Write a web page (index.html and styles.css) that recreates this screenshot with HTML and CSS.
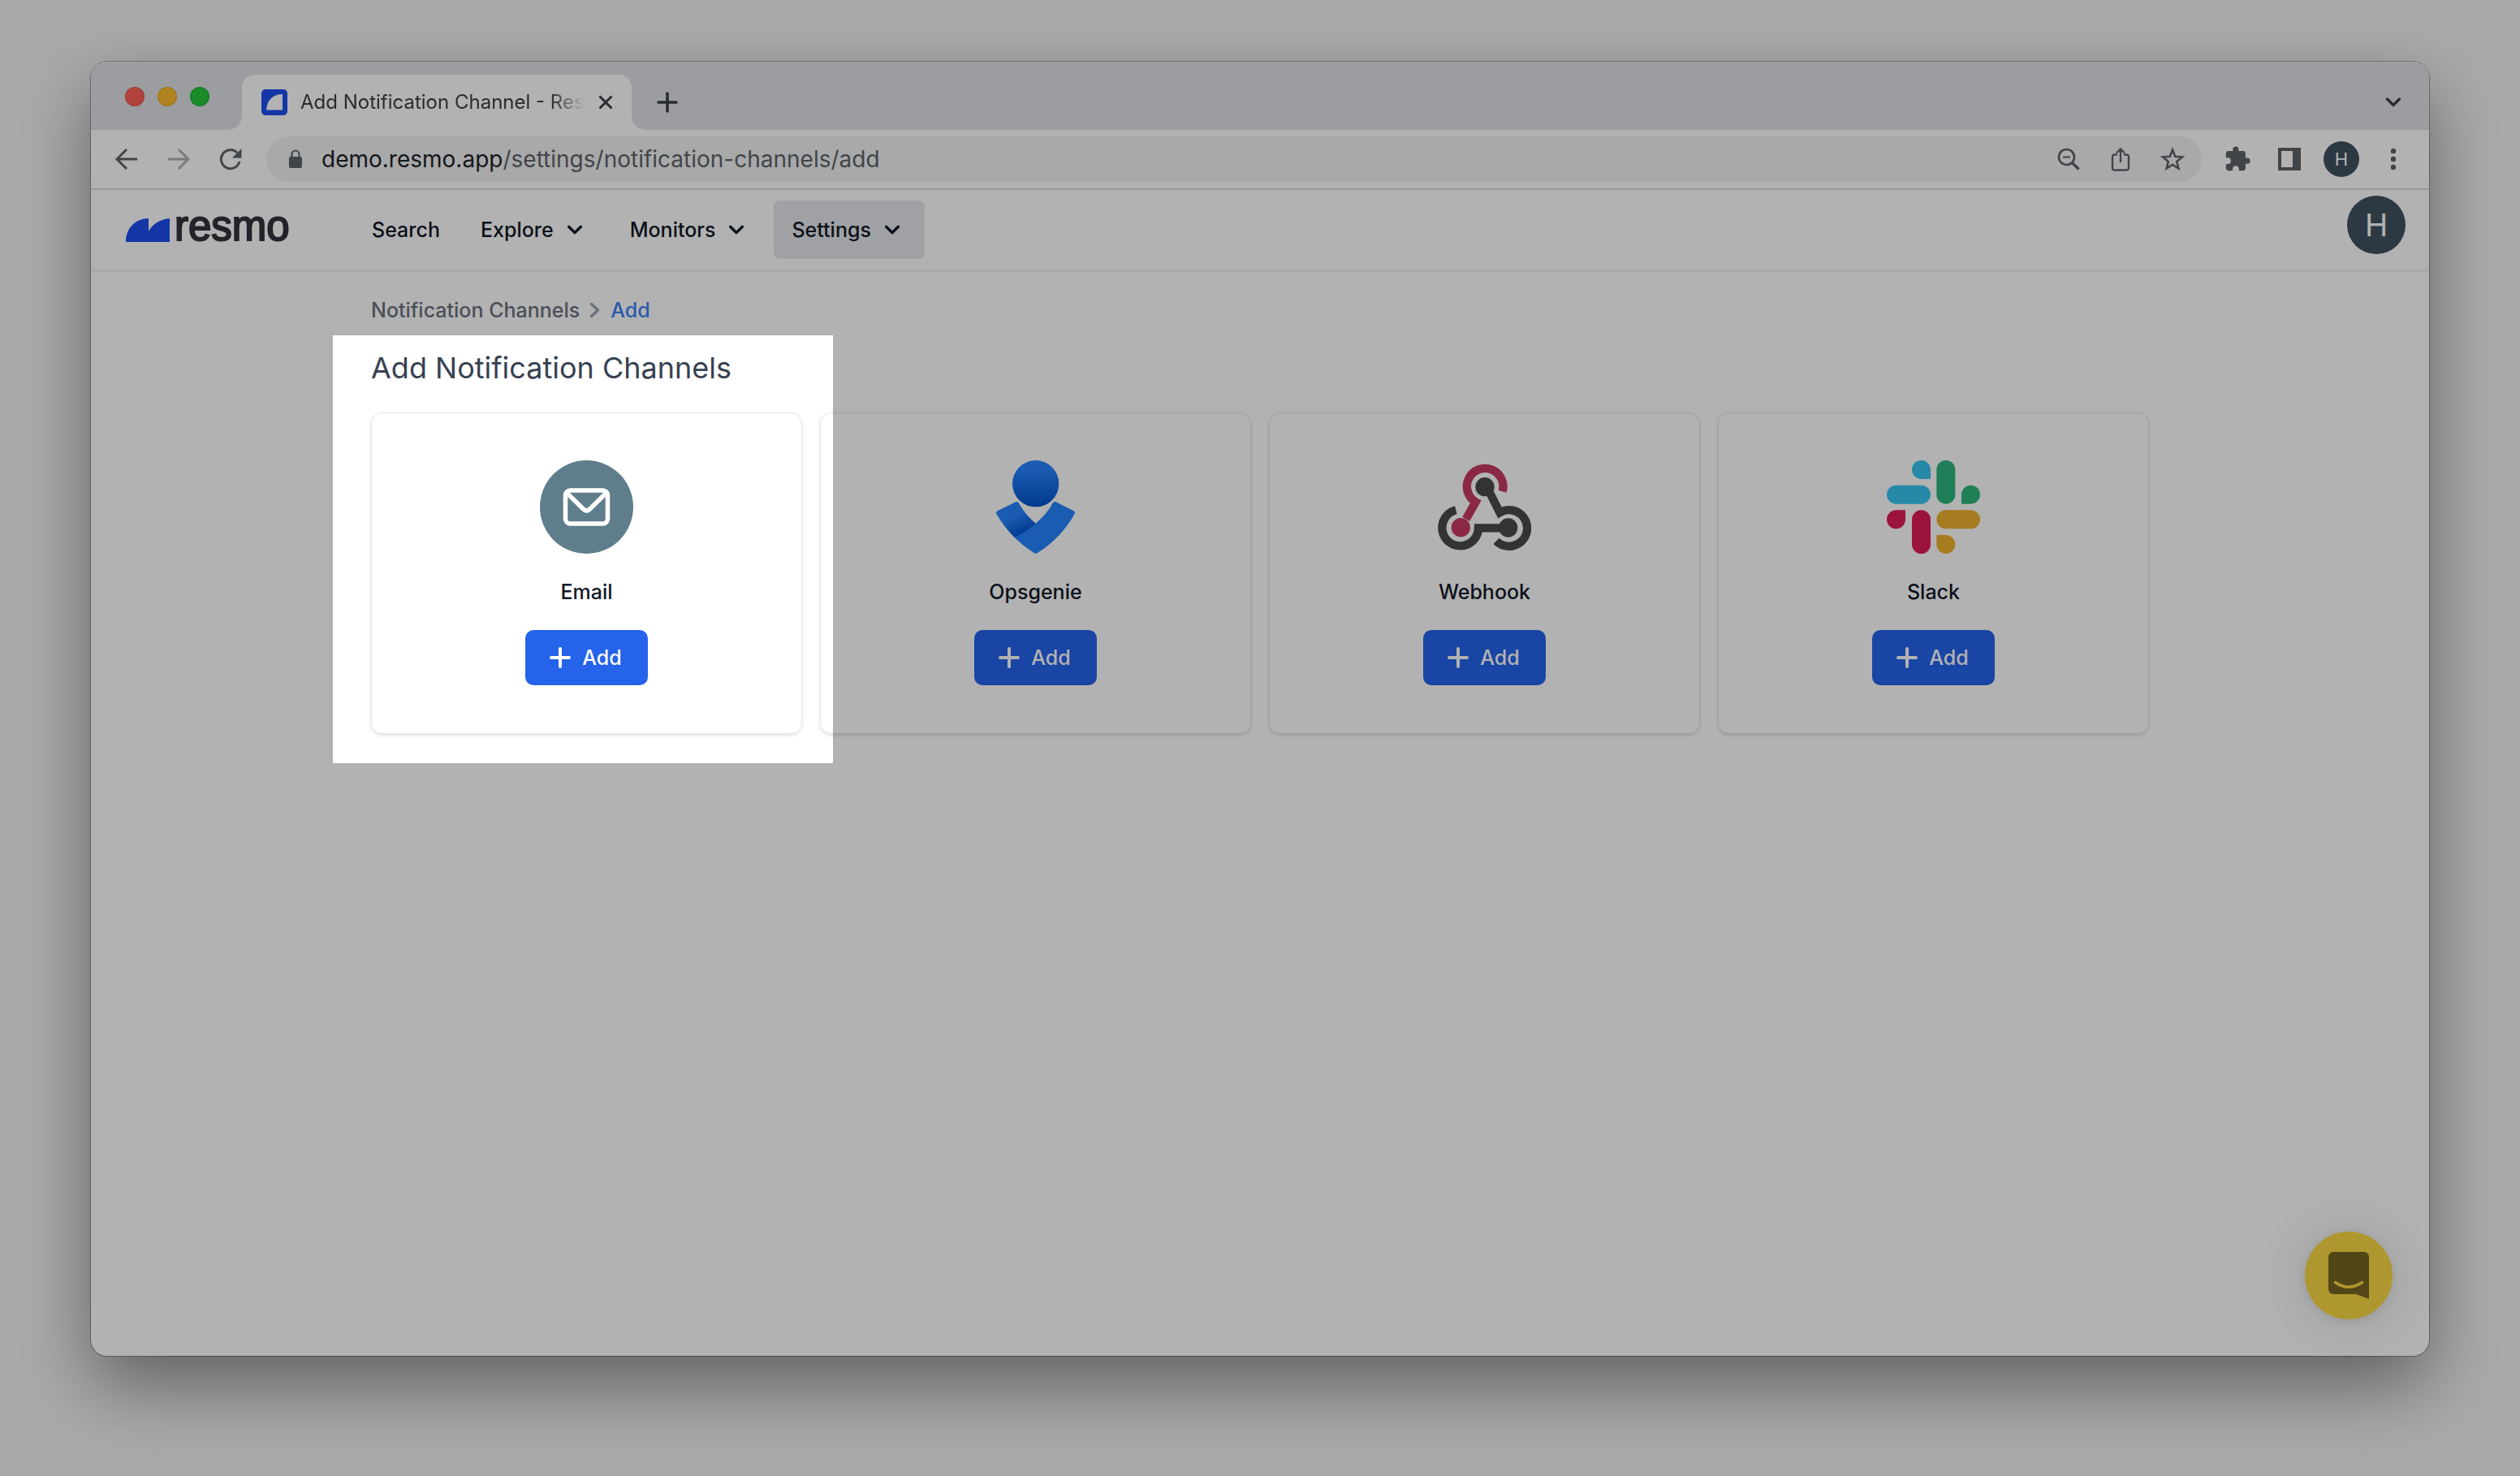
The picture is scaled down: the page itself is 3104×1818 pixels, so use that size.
FILE: index.html
```html
<!DOCTYPE html>
<html lang="en">
<head>
<meta charset="utf-8">
<meta name="viewport" content="width=device-width, initial-scale=1">
<title>Add Notification Channel - Resmo</title>
<link rel="stylesheet" href="styles.css">
</head>
<body>
<svg class="sprite" aria-hidden="true">
  <symbol id="chevron" viewBox="0 0 20 20"><path d="M5.9 7.9 10 12l4.1-4.1" fill="none" stroke="currentColor" stroke-width="1.9" stroke-linecap="round" stroke-linejoin="round"/></symbol>
  <symbol id="plus" viewBox="0 0 36 36"><path d="M18 7v22M7 18h22" fill="none" stroke="currentColor" stroke-width="4" stroke-linecap="round"/></symbol>
</svg>
<div class="window">
  <div class="tabstrip">
    <div class="lights"><span class="light red"></span><span class="light amber"></span><span class="light green"></span></div>
    <div class="tab">
      <svg class="favicon" viewBox="0 0 32 32"><rect width="32" height="32" rx="5" fill="#1d4ef0"/><path d="M6 25.500C7 14 13 6 26 6v19.500z" fill="#fff"/></svg>
      <span class="tab-title">Add Notification Channel - Resmo</span>
      <button class="plain" aria-label="Close tab"><svg width="20" height="20" viewBox="0 0 20 20"><path d="M2.500 2.500l15 15M17.500 2.500l-15 15" stroke="#3c4043" stroke-width="3"/></svg></button>
    </div>
    <button class="plain new-tab" aria-label="New tab"><svg width="26" height="26" viewBox="0 0 26 26"><path d="M13 2v22M2 13h22" stroke="#3c4043" stroke-width="3.600" stroke-linecap="round"/></svg></button>
    <button class="plain tool tab-search" aria-label="Search tabs"><svg width="24" height="24" viewBox="0 0 24 24"><path d="M4.500 8 12 15.500 19.500 8" fill="none" stroke="#3c4043" stroke-width="3.200" stroke-linecap="round" stroke-linejoin="round"/></svg></button>
  </div>
  <div class="toolbar">
    <button class="plain tool" aria-label="Back"><svg width="32" height="32" viewBox="0 0 32 32"><path d="M29 16H4.500M16 4 4 16l12 12" fill="none" stroke="#5f6368" stroke-width="3"/></svg></button>
    <button class="plain tool faded" aria-label="Forward"><svg width="32" height="32" viewBox="0 0 32 32"><path d="M3 16h24.500M16 4l12 12-12 12" fill="none" stroke="#5f6368" stroke-width="3"/></svg></button>
    <button class="plain tool" aria-label="Reload"><svg width="32" height="32" viewBox="0 0 32 32"><path d="M27 19a11.500 11.500 0 1 1-3-11" fill="none" stroke="#5f6368" stroke-width="3"/><path d="M29.500 3v11.500H18z" fill="#5f6368"/></svg></button>
    <div class="omnibox">
      <svg class="lock" width="24" height="28" viewBox="0 0 24 28"><rect x="4" y="11" width="16" height="14" rx="2" fill="#5f6368"/><path d="M7.500 12V8a4.500 4.500 0 0 1 9 0v4" fill="none" stroke="#5f6368" stroke-width="2.200"/></svg>
      <div class="url" role="textbox" aria-label="Address" contenteditable="true" spellcheck="false"><span class="host">demo.resmo.app</span>/settings/notification-channels/add</div>
      <button class="plain tool" aria-label="Zoom"><svg width="32" height="32" viewBox="0 0 32 32"><g fill="none" stroke="#5f6368"><circle cx="13.500" cy="13.500" r="9.500" stroke-width="2.600"/><path d="M9 13.500h9" stroke-width="2"/><path d="M20.500 20.500l8 8" stroke-width="3.600"/></g></svg></button>
      <button class="plain tool" aria-label="Share"><svg width="32" height="32" viewBox="0 0 32 32"><path d="M12 10.500H8.500A2.500 2.500 0 0 0 6 13v14a2.500 2.500 0 0 0 2.500 2.500h15A2.500 2.500 0 0 0 26 27V13a2.500 2.500 0 0 0-2.500-2.500H20M16 20V4M11 8.500l5-5 5 5" fill="none" stroke="#5f6368" stroke-width="2.400"/></svg></button>
      <button class="plain tool" aria-label="Bookmark"><svg width="32" height="32" viewBox="0 0 32 32"><path d="M16 4.500l3.200 8.200 8.800.6-6.800 5.600 2.200 8.600-7.400-4.700-7.400 4.700 2.200-8.600L4 13.300l8.800-.6z" fill="none" stroke="#5f6368" stroke-width="2.600"/></svg></button>
    </div>
    <button class="plain tool" aria-label="Extensions"><svg width="34" height="34" viewBox="0 0 24 24"><path d="M20.500 11H19V7c0-1.100-.9-2-2-2h-4V3.500a2.500 2.500 0 0 0-5 0V5H4c-1.100 0-2 .9-2 2v3.800h1.500a2.700 2.700 0 0 1 0 5.400H2V20c0 1.100.9 2 2 2h3.800v-1.500a2.700 2.700 0 0 1 5.400 0V22H17c1.100 0 2-.9 2-2v-4h1.500a2.500 2.500 0 0 0 0-5z" fill="#5f6368"/></svg></button>
    <button class="plain tool" aria-label="Side panel"><svg width="28" height="28" viewBox="0 0 28 28"><path d="M0 0h28v28H0zM4 4v20h14V4z" fill="#5f6368" fill-rule="evenodd"/></svg></button>
    <button class="plain tool" aria-label="Profile"><span class="avatar small">H</span></button>
    <button class="plain tool" aria-label="Menu"><svg width="28" height="28" viewBox="0 0 28 28" fill="#5f6368"><circle cx="14" cy="4" r="3.200"/><circle cx="14" cy="14" r="3.200"/><circle cx="14" cy="24" r="3.200"/></svg></button>
  </div>
  <header class="app-header">
    <a class="logo" href="#"><svg width="54" height="29" viewBox="0 0 54 29"><path d="M0 29C0 12 12 0 28 0v16C33 7 42 1 54 0v29z" fill="#1d4ef0"/></svg><span>resmo</span></a>
    <nav class="nav">
      <a href="#">Search</a>
      <button>Explore<svg><use href="#chevron"/></svg></button>
      <button>Monitors<svg><use href="#chevron"/></svg></button>
      <button class="active">Settings<svg><use href="#chevron"/></svg></button>
    </nav>
    <button class="plain avatar large" aria-label="Account">H</button>
  </header>
  <main class="content">
    <nav class="crumbs" aria-label="Breadcrumb"><a href="#">Notification Channels</a><svg width="14" height="20" viewBox="0 0 14 20"><path d="M2.500 2.500 10.500 10l-8 7.500" fill="none" stroke="#9ca3af" stroke-width="3.500" stroke-linecap="round" stroke-linejoin="round"/></svg><a class="current" href="#">Add</a></nav>
    <h1>Add Notification Channels</h1>
    <div class="cards">
      <section class="card">
        <svg class="brand" viewBox="0 0 115 115"><circle cx="57.500" cy="57.500" r="57.500" fill="#607d8b"/><rect x="31.500" y="37" width="52" height="41" rx="6" fill="none" stroke="#fff" stroke-width="5.500"/><path d="M32.500 39.500 53.500 60q4 4 8 0L82.500 39.500" fill="none" stroke="#fff" stroke-width="5.500"/></svg>
        <h2>Email</h2>
        <button class="add"><svg><use href="#plus"/></svg>Add</button>
      </section>
      <section class="card">
        <svg class="brand" viewBox="114 81 345 345">
          <defs>
            <linearGradient id="head" x1="0" y1="0" x2="0" y2="1"><stop offset=".18" stop-color="#2684ff"/><stop offset="1" stop-color="#0052cc"/></linearGradient>
            <linearGradient id="arm" gradientUnits="userSpaceOnUse" x1="210" y1="270" x2="248" y2="350"><stop offset=".2" stop-color="#2684ff"/><stop offset="1" stop-color="#0052cc"/></linearGradient>
          </defs>
          <circle cx="287" cy="167" r="86" fill="url(#head)"/>
          <path d="M213 235q7-3 11 3 24 44 63 76L250 380 208 365Q172 330 142 279q-3-7 4-11z" fill="url(#arm)"/>
          <path d="M362 235q-7-3-11 3-24 44-64 76-38 34-79 51 36 35 74 59 5 3 10 0 87-53 139-145 3-7-4-11z" fill="#2684ff"/>
        </svg>
        <h2>Opsgenie</h2>
        <button class="add"><svg><use href="#plus"/></svg>Add</button>
      </section>
      <section class="card">
        <svg class="brand" viewBox="92 81 345 345">
          <g fill="none" stroke-width="31">
            <path d="M331 196A67 67 0 1 0 232 235L196 298" stroke="#c73a63"/>
            <path d="M159 265A67 67 0 1 0 242 331H330" stroke="#4a4a4a"/>
            <path d="M283 198 321 274A67 67 0 1 1 308 379" stroke="#4a4a4a"/>
          </g>
          <circle cx="177" cy="329" r="35" fill="#c73a63"/>
          <circle cx="266" cy="179" r="35" fill="#4a4a4a"/>
          <circle cx="352" cy="330" r="35" fill="#4a4a4a"/>
        </svg>
        <h2>Webhook</h2>
        <button class="add"><svg><use href="#plus"/></svg>Add</button>
      </section>
      <section class="card">
        <svg class="brand" viewBox="99 81 345 345">
          <g fill="#36c5f0"><path d="M261 150h-35a34.500 34.500 0 1 1 35-34.500z"/><rect x="99" y="173" width="162" height="69" rx="34.500"/></g>
          <g fill="#2eb67d"><rect x="283" y="81" width="69" height="161" rx="34.500"/><path d="M375 242v-35a34.500 34.500 0 1 1 34.500 35z"/></g>
          <g fill="#ecb22e"><rect x="283" y="265" width="161" height="69" rx="34.500"/><path d="M283 357h35a34.500 34.500 0 1 1-35 34.500z"/></g>
          <g fill="#e01e5a"><path d="M168 265v35a34.500 34.500 0 1 1-34.500-35z"/><rect x="192" y="265" width="69" height="161" rx="34.500"/></g>
        </svg>
        <h2>Slack</h2>
        <button class="add"><svg><use href="#plus"/></svg>Add</button>
      </section>
    </div>
    <div class="spotlight"></div>
  </main>
  <button class="plain messenger" aria-label="Open chat"><svg width="50" height="58" viewBox="0 0 50 58"><path d="M6 0h38a6 6 0 0 1 6 6v52l-16-6H6a6 6 0 0 1-6-6V6a6 6 0 0 1 6-6z" fill="#786520"/><path d="M8.500 37.500q16 11.500 33 0" fill="none" stroke="#f9d843" stroke-width="3.400" stroke-linecap="round"/></svg></button>
</div>
</body>
</html>
```
FILE: styles.css
```css
*, *::before, *::after { box-sizing: border-box; }

body {
  margin: 0;
  min-height: 100vh;
  padding: 76px 112px 148px;
  display: flex;
  background: #f3f3f3;
  font-family: Inter, "Liberation Sans", sans-serif;
  font-size: 25px;
  line-height: 36px;
  color: #111827;
  overflow-x: hidden;
}

a { color: inherit; text-decoration: none; }
button { font: inherit; color: inherit; border: 0; cursor: pointer; }
svg { display: block; flex: none; }
.sprite { position: absolute; width: 0; height: 0; }
.plain { padding: 0; background: none; }

.window {
  position: relative;
  flex: 1;
  min-width: 0;
  display: flex;
  flex-direction: column;
  background: #fff;
  border-radius: 20px;
  box-shadow: 0 0 0 1px rgba(0, 0, 0, .3), 0 36px 88px rgba(0, 0, 0, .42);
}

/* Browser chrome */
.tabstrip {
  display: flex;
  align-items: center;
  height: 84px;
  padding: 0 12px 0 42px;
  background: #dee1e6;
  border-radius: 20px 20px 0 0;
  box-shadow: inset 0 1px #eceef0;
}
.lights { display: flex; gap: 16px; width: 144px; margin-top: 2px; }
.light { width: 24px; height: 24px; border-radius: 50%; border: 1px solid rgba(0, 0, 0, .12); }
.red { background: #ff5f57; }
.amber { background: #febc2e; }
.green { background: #24c83c; }

.tab {
  position: relative;
  align-self: flex-end;
  display: flex;
  align-items: center;
  width: 480px;
  height: 68px;
  padding: 0 22px 0 24px;
  background: #fff;
  border-radius: 16px 16px 0 0;
}
.tab::before, .tab::after {
  content: "";
  position: absolute;
  bottom: 0;
  width: 16px;
  height: 16px;
}
.tab::before { right: 100%; background: radial-gradient(circle at 0 0, transparent 15px, #fff 16px); }
.tab::after { left: 100%; background: radial-gradient(circle at 100% 0, transparent 15px, #fff 16px); }
.favicon { width: 32px; height: 32px; }
.tab-title {
  flex: 1;
  margin: 0 16px;
  overflow: hidden;
  white-space: nowrap;
  font-size: 24px;
  color: #3c4043;
  -webkit-mask-image: linear-gradient(90deg, #000 88%, transparent);
  mask-image: linear-gradient(90deg, #000 88%, transparent);
}
.new-tab, .tab-search { margin-top: 16px; }
.new-tab { margin-left: 31px; }
.tab-search { margin-left: auto; }

.toolbar {
  display: flex;
  align-items: center;
  height: 74px;
  padding: 0 12px;
  border-bottom: 2px solid #dadada;
}
.tool { flex: none; display: flex; align-items: center; justify-content: center; width: 64px; height: 56px; }
.faded { opacity: .5; }
.omnibox {
  flex: 1;
  min-width: 0;
  display: flex;
  align-items: center;
  height: 56px;
  margin: 0 12px;
  padding: 0 4px 0 24px;
  border-radius: 28px;
  background: #f1f3f4;
}
.url {
  flex: 1;
  min-width: 0;
  margin-left: 20px;
  overflow: hidden;
  white-space: nowrap;
  font-size: 28px;
  color: #5f6368;
  outline: 0;
}
.host { color: #202124; }

.avatar {
  display: flex;
  align-items: center;
  justify-content: center;
  border-radius: 50%;
  background: #3f5260;
  color: #fff;
}
.small { width: 44px; height: 44px; font-size: 22px; }
.large { width: 72px; height: 72px; margin: 0 0 12px auto; font-size: 38px; }

/* Application */
.app-header {
  display: flex;
  align-items: center;
  height: 101px;
  padding: 0 29px 0 43px;
  border-bottom: 3px solid #f3f4f6;
}
.logo {
  display: flex;
  align-items: center;
  gap: 6px;
  width: 281px;
  font-family: "Liberation Sans", Arial, sans-serif;
  font-size: 51px;
  line-height: 52px;
  color: #31343c;
  -webkit-text-stroke: 2px #31343c;
}
.logo span { margin-top: -8px; }
.nav { display: flex; gap: 6px; font-weight: 500; }
.nav a, .nav button {
  display: flex;
  align-items: center;
  gap: 8px;
  height: 72px;
  padding: 0 22px;
  border-radius: 8px;
  background: none;
}
.nav svg { width: 36px; height: 36px; }
.nav .active { background: #e5e7eb; }

.content {
  position: relative;
  width: 100%;
  max-width: 2190px;
  margin: 0 auto;
  padding-top: 29px;
}
.crumbs { display: flex; align-items: center; gap: 12px; font-weight: 500; color: #6b7280; }
.current { color: #3b82f6; }
h1 { margin: 29px 0 31px; font-size: 36px; font-weight: 400; line-height: 48px; color: #374151; }
.cards { display: grid; grid-template-columns: repeat(4, 1fr); gap: 22px; }
.card {
  display: flex;
  flex-direction: column;
  align-items: center;
  gap: 29px;
  padding: 58px 20px 59px;
  border: 1px solid #e5e7eb;
  border-radius: 14px;
  box-shadow: 0 2px 4px rgba(0, 0, 0, .12);
}
.brand { width: 115px; height: 115px; }
h2 { margin: 0; font-size: 25px; font-weight: 500; line-height: 36px; }
.add {
  display: flex;
  align-items: center;
  gap: 9px;
  height: 68px;
  padding: 0 32px 0 25px;
  border-radius: 10px;
  background: #2563eb;
  color: #fff;
  font-weight: 500;
}
.add svg { width: 36px; height: 36px; }

/* Walkthrough spotlight: dims everything outside the highlighted area */
.spotlight {
  position: absolute;
  z-index: 10;
  left: -47px;
  top: 78px;
  width: 616px;
  height: 527px;
  box-shadow: 0 0 0 4000px rgba(0, 0, 0, .3);
  pointer-events: none;
}

.messenger {
  position: absolute;
  right: 45px;
  bottom: 45px;
  display: flex;
  align-items: center;
  justify-content: center;
  width: 108px;
  height: 108px;
  border-radius: 50%;
  background: #f9d843;
  box-shadow: 0 2px 12px rgba(0, 0, 0, .08), 0 4px 64px rgba(0, 0, 0, .14);
}
```
